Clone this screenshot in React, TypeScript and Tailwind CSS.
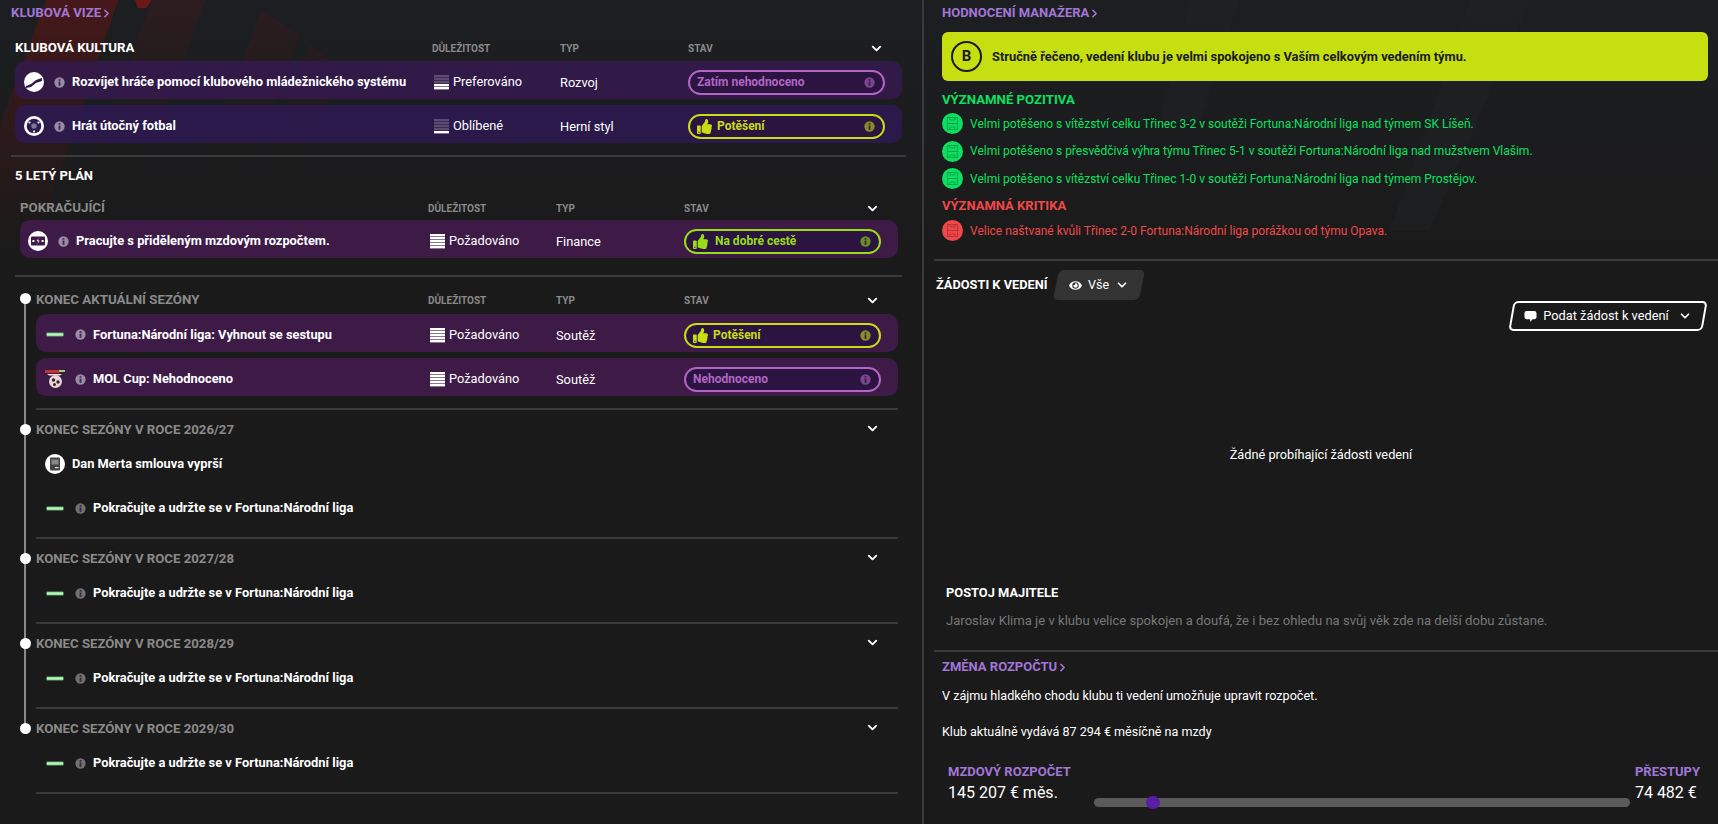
import React from "react";
import { ChevronDown, ChevronRight } from "lucide-react";
import { FaThumbsUp, FaEye } from "react-icons/fa";

const rowGrid = "grid grid-cols-[1fr_126px_128px_197px] items-center";

function Info({ className = "" }: { className?: string }) {
  return (
    <svg viewBox="0 0 12 12" className={`w-[11px] h-[11px] shrink-0 ${className}`}>
      <circle cx="6" cy="6" r="5.6" fill="currentColor" />
      <rect x="5" y="5" width="2" height="4.6" fill="#2b1a3a" opacity="0.85" />
      <rect x="5" y="2.3" width="2" height="1.8" fill="#2b1a3a" opacity="0.85" />
    </svg>
  );
}

function Bars({ level }: { level: number }) {
  return (
    <svg viewBox="0 0 15 15" className="w-[15px] h-[15px] shrink-0">
      {[0, 1, 2, 3, 4].map((i) => (
        <rect key={i} x="0" y={i * 3} width="15" height="2.4" fill="#fff" opacity={4 - i < level ? 1 : 0.22} />
      ))}
    </svg>
  );
}

function Head({ label, strong }: { label: string; strong?: boolean }) {
  return (
    <div className={`${rowGrid} h-[22px]`}>
      <span className={`text-[13.3px] font-bold ${strong ? "text-white" : "text-[#8a8a8a]"}`}>{label}</span>
      <span className="-ml-[2px] text-[10px] font-bold text-[#8a8a8a]">DŮLEŽITOST</span>
      <span className="text-[10px] font-bold text-[#8a8a8a]">TYP</span>
      <div className="flex items-center justify-between text-[10px] font-bold text-[#8a8a8a]">
        <span>STAV</span>
        <ChevronDown className="w-[15px] h-[15px] text-white mr-[1px]" strokeWidth={3} />
      </div>
    </div>
  );
}

function Pill({ tone, label, thumb }: { tone: "purple" | "yellow" | "green"; label: string; thumb?: boolean }) {
  const styles = {
    purple: "border-[#b265c4] text-[#b265c4]",
    yellow: "border-[#c8dd14] text-[#c8dd14]",
    green: "border-[#98dc17] text-[#98dc17]",
  }[tone];
  return (
    <div className={`h-[25px] rounded-full border-2 ${styles} bg-[#2c1440] flex items-center pl-[7px] pr-[8px] text-[12px] font-bold`}>
      {thumb && <FaThumbsUp className={`w-[15px] h-[15px] ${tone === "green" ? "mr-[7px]" : "mr-[5px]"}`} />}
      <span className="flex-1">{label}</span>
      <Info className="opacity-60" />
    </div>
  );
}

function RowIcon({ kind }: { kind: string }) {
  if (kind === "chart")
    return (
      <svg viewBox="0 0 20 20" className="w-[20px] h-[20px] shrink-0">
        <circle cx="10" cy="10" r="10" fill="#fff" />
        <path d="M2 14 L7 12 L12 8 L18 6 L18 9 L12 11 L7 15 L2 16Z" fill="#331a4a" />
      </svg>
    );
  if (kind === "ball")
    return (
      <svg viewBox="0 0 20 20" className="w-[20px] h-[20px] shrink-0">
        <circle cx="10" cy="10" r="10" fill="#fff" />
        <circle cx="10" cy="10" r="7.3" fill="#2f1a52" />
        <path d="M10 7 L13 9 L12 12.5 L8 12.5 L7 9Z" fill="#fff" opacity="0.4" />
        <circle cx="5.5" cy="6.5" r="1.1" fill="#fff" />
        <circle cx="14.5" cy="6.5" r="1.1" fill="#fff" />
        <circle cx="10" cy="15.5" r="1.1" fill="#fff" />
      </svg>
    );
  if (kind === "money")
    return (
      <svg viewBox="0 0 20 20" className="w-[20px] h-[20px] shrink-0">
        <circle cx="10" cy="10" r="10" fill="#fff" />
        <rect x="3" y="5.5" width="14" height="9" rx="1" fill="#3e1b47" />
        <path d="M10.8 6.5 L8.6 10.2 L10.4 10.2 L9.2 13.5 L11.6 9.4 L9.8 9.4Z" fill="#fff" />
        <rect x="4.4" y="9" width="2" height="2" fill="#fff" />
        <rect x="13.6" y="9" width="2" height="2" fill="#fff" />
      </svg>
    );
  if (kind === "contract")
    return (
      <svg viewBox="0 0 20 20" className="w-[20px] h-[20px] shrink-0">
        <circle cx="10" cy="10" r="10" fill="#fff" />
        <rect x="5" y="3.5" width="10" height="13" rx="1" fill="#444" />
        <rect x="6.5" y="5.5" width="7" height="5" fill="#888" />
        <rect x="10" y="13" width="3.5" height="1.2" fill="#ddd" />
      </svg>
    );
  if (kind === "cup")
    return (
      <svg viewBox="0 0 20 20" className="w-[20px] h-[20px] shrink-0">
        <path d="M0 1 H14 V4 H0Z" fill="#c9302c" />
        <path d="M14 1 H20 V3 H14Z" fill="#9bd36a" />
        <path d="M2 5 H17 L15 6.5 H4Z" fill="#e8e0e0" />
        <circle cx="10.5" cy="12.5" r="6.5" fill="#e8d5d5" />
        <circle cx="8.5" cy="11" r="1.7" fill="#3b2030" />
        <circle cx="13" cy="13" r="1.7" fill="#3b2030" />
        <circle cx="9.5" cy="15.5" r="1.5" fill="#3b2030" />
      </svg>
    );
  return (
    <svg viewBox="0 0 20 6" className="w-[20px] h-[5px] shrink-0">
      <rect x="0" y="0.8" width="20" height="4.4" fill="#8fe59a" />
      <rect x="0" y="2.5" width="20" height="1" fill="#c9f2cd" />
    </svg>
  );
}

function Row({
  icon, text, level, imp, typ, pill, bg, indent = "pl-[9px]",
}: {
  icon: string; text: string; level: number; imp: string; typ: string; pill: React.ReactNode; bg: string; indent?: string;
}) {
  return (
    <div className={`${rowGrid} h-[38px] rounded-[10px] ${bg} pr-[17px] pt-[4px] ${indent}`}>
      <div className="flex items-center">
        <div className="w-[20px] flex justify-center"><RowIcon kind={icon} /></div>
        <Info className="ml-[10px] text-[#9a8aa5]" />
        <span className="ml-[7px] text-[12.85px] font-bold text-white whitespace-nowrap">{text}</span>
      </div>
      <div className="flex items-center gap-[4px] text-[12.8px] text-white">
        <Bars level={level} />
        <span>{imp}</span>
      </div>
      <span className="text-[12.8px] text-white pt-[1px]">{typ}</span>
      {pill}
    </div>
  );
}

function Goal({ icon = "dash", text }: { icon?: string; text: string }) {
  return (
    <div className="flex items-center h-[20px] pl-[9px]">
      <div className="w-[20px] flex justify-center"><RowIcon kind={icon} /></div>
      {icon === "dash" && <Info className="ml-[10px] text-[#707070]" />}
      <span className="ml-[7px] text-[12.85px] font-bold text-white">{text}</span>
    </div>
  );
}

function Season({ label, children, height = "h-[83px]" }: { label: string; children: React.ReactNode; height?: string }) {
  return (
    <section className={`ml-[36px] mr-[24px] ${height} pt-[10px] relative`}>
      <span className="absolute left-[-16px] top-[14px] w-[11px] h-[11px] rounded-full bg-white" />
      <div className={`${rowGrid} h-[20px] pr-[17px]`}>
        <span className="text-[13.2px] font-bold text-[#8a8a8a] col-span-3">{label}</span>
        <div className="flex justify-end">
          <ChevronDown className="w-[15px] h-[15px] text-white mr-[1px] -mt-[4px]" strokeWidth={3} />
        </div>
      </div>
      <div className="pt-[14px]">{children}</div>
    </section>
  );
}

function Pitch({ color, line }: { color: string; line: string }) {
  return (
    <svg viewBox="0 0 21 21" className="w-[21px] h-[21px] shrink-0">
      <circle cx="10.5" cy="10.5" r="10.5" fill={color} />
      <rect x="5.5" y="4.5" width="10" height="12" fill="none" stroke={line} strokeWidth="1" />
      <path d="M5.5 10.5 H15.5 M8 4.5 V7 H13 V4.5 M8 16.5 V14 H13 V16.5" fill="none" stroke={line} strokeWidth="1" />
    </svg>
  );
}

function Feedback({ text, color, tone, line }: { text: string; color: string; tone: string; line: string }) {
  return (
    <div className={`flex items-center gap-[7px] text-[12px] ${tone}`}>
      <Pitch color={color} line={line} />
      <span>{text}</span>
    </div>
  );
}

function Link({ children, className = "" }: { children: React.ReactNode; className?: string }) {
  return (
    <div className={`flex items-center font-bold text-[#a276d8] ${className}`}>
      <span>{children}</span>
      <ChevronRight className="w-[13px] h-[13px] ml-[-1px]" strokeWidth={3} />
    </div>
  );
}

const Divider = ({ className = "" }: { className?: string }) => <div className={`h-[2px] bg-[#3a3a3a] ${className}`} />;

export default function App() {
  return (
    <div className="relative w-[1718px] h-[824px] overflow-hidden bg-[#1a1a1a] text-white font-['Roboto',sans-serif]">
      <svg className="absolute inset-0 pointer-events-none" width="1718" height="824" viewBox="0 0 1718 824">
        <defs>
          <linearGradient id="red" gradientUnits="userSpaceOnUse" x1="0" y1="0" x2="0" y2="260">
            <stop offset="0" stopColor="#551616" stopOpacity="0.75" />
            <stop offset="1" stopColor="#3a1414" stopOpacity="0" />
          </linearGradient>
          <linearGradient id="red2" gradientUnits="userSpaceOnUse" x1="0" y1="0" x2="0" y2="170">
            <stop offset="0" stopColor="#3a1a1c" stopOpacity="0.55" />
            <stop offset="1" stopColor="#2a1a1a" stopOpacity="0" />
          </linearGradient>
          <linearGradient id="top" x1="0" y1="0" x2="0" y2="1">
            <stop offset="0" stopColor="#1d1e21" />
            <stop offset="1" stopColor="#1a1a1a" />
          </linearGradient>
        </defs>
        <rect width="1718" height="270" fill="url(#top)" />
        <polygon points="46,0 118,0 30,260 -50,260" fill="url(#red)" />
        <polygon points="135,0 152,0 146,8 138,8" fill="#6b1818" />
        <polygon points="152,0 205,0 145,170 90,170" fill="url(#red2)" />
        <polygon points="262,10 300,35 250,170 200,170" fill="url(#red2)" />
        <polygon points="310,45 345,70 300,170 265,170" fill="url(#red2)" />
        <polygon points="1190,0 1240,0 1200,120 1160,120" fill="#202124" opacity="0.6" />
        <polygon points="1470,0 1530,0 1430,230 1390,230" fill="#202124" opacity="0.5" />
      </svg>

      <div className="relative flex h-full">
        <div className="w-[924px] shrink-0 border-r-2 border-[#3a3a3a]">
          <Link className="h-[26px] pl-[11px] text-[13.3px]">KLUBOVÁ VIZE</Link>
          <div className="mt-[11px] ml-[15px] w-[887px]">
            <div className="pr-[17px] pb-[2px]"><Head label="KLUBOVÁ KULTURA" strong /></div>
            <div className="flex flex-col gap-[6px]">
              <Row bg="bg-[#341a4c]/90" icon="chart" level={2} imp="Preferováno" typ="Rozvoj" text="Rozvíjet hráče pomocí klubového mládežnického systému" pill={<Pill tone="purple" label="Zatím nehodnoceno" />} />
              <Row bg="bg-[#2e1a50]/90" icon="ball" level={1} imp="Oblíbené" typ="Herní styl" text="Hrát útočný fotbal" pill={<Pill tone="yellow" label="Potěšení" thumb />} />
            </div>
          </div>
          <Divider className="ml-[11px] w-[895px] mt-[12px]" />
          <div className="ml-[15px] mt-[9px] h-[20px] flex items-center text-[13px] font-bold">5 LETÝ PLÁN</div>
          <div className="ml-[20px] w-[878px] mt-[11px]">
            <div className="pr-[17px] pb-[1px]"><Head label="POKRAČUJÍCÍ" /></div>
            <Row bg="bg-[#3e1b47]" indent="pl-[8px]" icon="money" level={5} imp="Požadováno" typ="Finance" text="Pracujte s přiděleným mzdovým rozpočtem." pill={<Pill tone="green" label="Na dobré cestě" thumb />} />
          </div>
          <Divider className="ml-[15px] w-[887px] mt-[17px]" />

          <div className="relative">
            <div className="absolute left-[24px] top-[22px] w-[2px] h-[429px] bg-[#8a8a8a]" />
            <section className="ml-[36px] mr-[24px] relative pt-[12px]">
              <span className="absolute left-[-16px] top-[16px] w-[11px] h-[11px] rounded-full bg-white" />
              <div className="pr-[17px]"><Head label="KONEC AKTUÁLNÍ SEZÓNY" /></div>
              <div className="flex flex-col gap-[6px] mt-[3px]">
                <Row bg="bg-[#3e1b47]" icon="dash" level={5} imp="Požadováno" typ="Soutěž" text="Fortuna:Národní liga: Vyhnout se sestupu" pill={<Pill tone="yellow" label="Potěšení" thumb />} />
                <Row bg="bg-[#3e1b47]" icon="cup" level={5} imp="Požadováno" typ="Soutěž" text="MOL Cup: Nehodnoceno" pill={<Pill tone="purple" label="Nehodnoceno" />} />
              </div>
              <Divider className="mt-[12px]" />
            </section>

            <Season label="KONEC SEZÓNY V ROCE 2026/27" height="h-[127px]">
              <Goal icon="contract" text="Dan Merta smlouva vyprší" />
              <div className="mt-[24px]"><Goal text="Pokračujte a udržte se v Fortuna:Národní liga" /></div>
            </Season>
            <Divider className="ml-[36px] w-[862px]" />
            {["2027/28", "2028/29", "2029/30"].map((y) => (
              <React.Fragment key={y}>
                <Season label={`KONEC SEZÓNY V ROCE ${y}`}>
                  <Goal text="Pokračujte a udržte se v Fortuna:Národní liga" />
                </Season>
                <Divider className="ml-[36px] w-[862px]" />
              </React.Fragment>
            ))}
          </div>
        </div>

        <div className="flex-1 min-w-0">
          <div className="pl-[18px] pr-[10px]">
            <Link className="h-[26px] text-[13px]">HODNOCENÍ MANAŽERA</Link>
            <div className="mt-[6px] h-[49px] rounded-[6px] bg-[#c5df10] flex items-center pl-[9px] text-[#1a1a1a]">
              <div className="w-[31px] h-[31px] rounded-full border-[2.5px] border-[#1a1a1a] flex items-center justify-center text-[15px] font-bold">B</div>
              <span className="ml-[10px] text-[12.85px] font-bold">Stručně řečeno, vedení klubu je velmi spokojeno s Vaším celkovým vedením týmu.</span>
            </div>
            <div className="mt-[10px] h-[18px] flex items-center text-[13.2px] font-bold text-[#0de060]">VÝZNAMNÉ POZITIVA</div>
            <div className="flex flex-col gap-[6.5px] mt-[4px]">
              <Feedback color="#0de060" line="#0aa549" tone="text-[#0de060]" text="Velmi potěšeno s vítězství celku Třinec 3-2 v soutěži Fortuna:Národní liga nad týmem SK Líšeň." />
              <Feedback color="#0de060" line="#0aa549" tone="text-[#0de060]" text="Velmi potěšeno s přesvědčivá výhra týmu Třinec 5-1 v soutěži Fortuna:Národní liga nad mužstvem Vlašim." />
              <Feedback color="#0de060" line="#0aa549" tone="text-[#0de060]" text="Velmi potěšeno s vítězství celku Třinec 1-0 v soutěži Fortuna:Národní liga nad týmem Prostějov." />
            </div>
            <div className="mt-[8px] h-[18px] flex items-center text-[13px] font-bold text-[#f04848]">VÝZNAMNÁ KRITIKA</div>
            <div className="mt-[5px]">
              <Feedback color="#f04848" line="#b83434" tone="text-[#f04848]" text="Velice naštvané kvůli Třinec 2-0 Fortuna:Národní liga porážkou od týmu Opava." />
            </div>
          </div>
          <Divider className="ml-[10px] mt-[18px]" />

          <div className="h-[389px] pt-[9px]">
            <div className="flex items-center pl-[12px]">
              <span className="text-[12.8px] font-bold w-[120px]">ŽÁDOSTI K VEDENÍ</span>
              <div className="relative w-[86px] h-[30px] flex items-center justify-center gap-[6px] text-[12.5px]">
                <div className="absolute inset-0 -skew-x-12 rounded-[5px] bg-[#333333]" />
                <FaEye className="relative w-[13px] h-[13px] text-white" />
                <span className="relative">Vše</span>
                <ChevronDown className="relative w-[14px] h-[14px]" strokeWidth={3} />
              </div>
            </div>
            <div className="flex justify-end pr-[13px]">
              <div className="relative w-[194px] h-[30px] mt-[1px] flex items-center justify-center gap-[6px] text-[12.8px]">
                <div className="absolute inset-0 -skew-x-[10deg] rounded-[5px] border-2 border-white" />
                <svg viewBox="0 0 14 14" className="relative w-[13px] h-[13px]">
                  <path d="M3 1 H11 Q13.5 1 13.5 3.5 V7 Q13.5 10 11 10 H9 L7 13 L6.5 10 H3 Q0.5 10 0.5 7 V3.5 Q0.5 1 3 1Z" fill="#fff" />
                </svg>
                <span className="relative">Podat žádost k vedení</span>
                <ChevronDown className="relative w-[14px] h-[14px] ml-[3px]" strokeWidth={3} />
              </div>
            </div>
            <div className="mt-[114px] text-center text-[12.75px]">Žádné probíhající žádosti vedení</div>
            <div className="mt-[119px] ml-[22px] text-[12.85px] font-bold">POSTOJ MAJITELE</div>
            <div className="mt-[9px] ml-[22px] text-[13.1px] text-[#777777]">
              Jaroslav Klima je v klubu velice spokojen a doufá, že i bez ohledu na svůj věk zde na delší dobu zůstane.
            </div>
          </div>
          <Divider className="ml-[10px]" />
          <div className="pl-[18px] pr-[18px]">
            <Link className="mt-[6px] h-[18px] text-[13px]">ZMĚNA ROZPOČTU</Link>
            <p className="mt-[11px] text-[12.6px]">V zájmu hladkého chodu klubu ti vedení umožňuje upravit rozpočet.</p>
            <p className="mt-[17px] text-[12.55px]">Klub aktuálně vydává 87 294 € měsíčně na mzdy</p>
            <div className="mt-[20px] pl-[6px] grid grid-cols-[146px_1fr_auto] items-end">
              <div>
                <div className="text-[13px] font-bold text-[#a276d8]">MZDOVÝ ROZPOČET</div>
                <div className="text-[16px]">145 207 € měs.</div>
              </div>
              <div className="relative h-[9px] -mb-[2px] mr-[5px] rounded-full bg-[#5a5a5a]">
                <span className="absolute left-[52px] top-[-2px] w-[14px] h-[13px] rounded-full bg-[#5a1ea6]" />
              </div>
              <div>
                <div className="text-[13px] font-bold text-[#a276d8]">PŘESTUPY</div>
                <div className="text-[16px]">74 482 €</div>
              </div>
            </div>
          </div>
        </div>
      </div>
    </div>
  );
}
